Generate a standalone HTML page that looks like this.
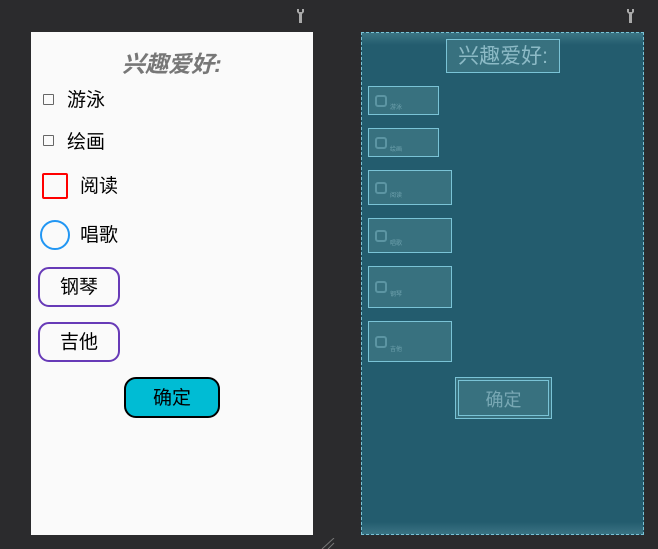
<!DOCTYPE html>
<html><head><meta charset="utf-8"><style>
*{margin:0;padding:0;box-sizing:border-box}
body{width:658px;height:549px;background:#2b2b2d;position:relative;overflow:hidden;font-family:"Liberation Sans","Noto Sans CJK SC",sans-serif}
.a{position:absolute}
.ph{left:31px;top:32px;width:282px;height:503px;background:#fafafa}
.t{color:#000;font-size:19px;line-height:20px}
.bp{left:361px;top:32px;width:283px;height:503px;background:#235c6e;border:1px dashed #7ac3d6}
.bx{position:absolute;border:1px solid #7ac3d6;background:#38717f}
.ic{position:absolute;left:6px;width:12px;height:12px;border:2px solid #5c95a3;border-radius:3px}
.sm{position:absolute;left:21px;font-size:6px;color:#6fa2ae}
</style></head><body>
<svg class="a" style="left:296px;top:9px" width="9" height="14" viewBox="0 0 9 14"><path d="M1 0v3l2 2v9h3V5l2-2V0L6 0v3H3V0z" fill="#a9a9a9"/></svg>
<svg class="a" style="left:626px;top:9px" width="9" height="14" viewBox="0 0 9 14"><path d="M1 0v3l2 2v9h3V5l2-2V0L6 0v3H3V0z" fill="#a9a9a9"/></svg>
<svg class="a" style="left:320px;top:538px" width="16" height="11"><path d="M2 11L14 0M8 11L14 5" stroke="#777" stroke-width="1"/></svg>
<div class="a ph"></div>
<div class="a" style="left:31px;top:45px;width:282px;text-align:center;font-size:23px;font-style:italic;font-weight:bold;color:#777">兴趣爱好:</div>
<div class="a" style="left:43px;top:94px;width:11px;height:11px;border:1.5px solid #666;border-radius:1px"></div>
<div class="a t" style="left:67px;top:91px">游泳</div>
<div class="a" style="left:43px;top:135px;width:11px;height:11px;border:1.5px solid #666;border-radius:1px"></div>
<div class="a t" style="left:67px;top:133px">绘画</div>
<div class="a" style="left:42px;top:173px;width:26px;height:26px;border:2px solid #f00;border-radius:2px"></div>
<div class="a t" style="left:80px;top:177px">阅读</div>
<div class="a" style="left:40px;top:220px;width:30px;height:30px;border:2px solid #2196f3;border-radius:50%"></div>
<div class="a t" style="left:80px;top:226px">唱歌</div>
<div class="a t" style="left:38px;top:267px;width:82px;height:40px;border:2px solid #673ab7;border-radius:11px;text-align:center;line-height:38px">钢琴</div>
<div class="a t" style="left:38px;top:322px;width:82px;height:40px;border:2px solid #673ab7;border-radius:11px;text-align:center;line-height:38px">吉他</div>
<div class="a t" style="left:124px;top:377px;width:96px;height:41px;border:2px solid #000;border-radius:12px;background:#00bcd4;text-align:center;line-height:39px">确定</div>
<div class="a bp">
<div class="a" style="left:0;top:0;width:281px;height:12px;background:linear-gradient(#3c7584,#235c6e)"></div>
<div class="a" style="left:0;bottom:0;width:281px;height:12px;background:linear-gradient(#235c6e,#3a7383)"></div>
</div>
<div class="bx" style="left:446px;top:39px;width:114px;height:34px;font-size:21px;color:#8cbac6;line-height:34px;text-align:center">兴趣爱好:</div>
<div class="bx" style="left:368px;top:86px;width:71px;height:29px"><div class="ic" style="top:8px"></div><div class="sm" style="top:15px">游泳</div></div>
<div class="bx" style="left:368px;top:128px;width:71px;height:29px"><div class="ic" style="top:8px"></div><div class="sm" style="top:15px">绘画</div></div>
<div class="bx" style="left:368px;top:170px;width:84px;height:35px"><div class="ic" style="top:11px"></div><div class="sm" style="top:19px">阅读</div></div>
<div class="bx" style="left:368px;top:218px;width:84px;height:35px"><div class="ic" style="top:11px"></div><div class="sm" style="top:19px">唱歌</div></div>
<div class="bx" style="left:368px;top:266px;width:84px;height:42px"><div class="ic" style="top:14px"></div><div class="sm" style="top:22px">钢琴</div></div>
<div class="bx" style="left:368px;top:321px;width:84px;height:41px"><div class="ic" style="top:14px"></div><div class="sm" style="top:22px">吉他</div></div>
<div class="bx" style="left:455px;top:377px;width:97px;height:42px;padding:2px"><div style="width:100%;height:100%;border:1px solid #7ac3d6;text-align:center;line-height:38px;font-size:18px;color:#78a8b4">确定</div></div>
</body></html>
